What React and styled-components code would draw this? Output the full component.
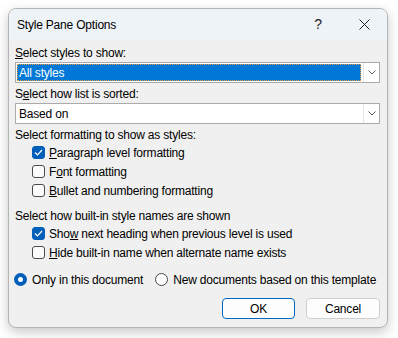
import React from "react";
import styled, { createGlobalStyle } from "styled-components";

const GlobalStyle = createGlobalStyle`
  html, body {
    margin: 0;
    padding: 0;
    background: #ffffff;
  }
  body {
    font-family: "Liberation Sans", Arial, sans-serif;
    font-size: 12px;
    letter-spacing: -0.2px;
    color: #000;
  }
`;

const Page = styled.div`
  width: 398px;
  height: 338px;
  padding: 8px;
  box-sizing: border-box;
`;

const Dialog = styled.div`
  width: 380px;
  height: 320px;
  box-sizing: border-box;
  border: 1px solid #b4b4b4;
  border-radius: 8px;
  background: #f0f0f0;
  overflow: hidden;
  box-shadow: 0 4px 12px rgba(0, 0, 0, 0.22);
  display: flex;
  flex-direction: column;
`;

const TitleBar = styled.div`
  height: 30px;
  background: #eef3f8;
  display: flex;
  align-items: center;
  padding-left: 8px;
`;

const Title = styled.div`
  flex: 1;
  font-size: 12px;
  padding-top: 1px;
`;

const TitleButton = styled.div`
  width: 46px;
  height: 30px;
  display: flex;
  align-items: center;
  justify-content: center;
  font-size: 14px;
  color: #222;
`;

const Body = styled.div`
  padding: 6px 7px 8px 6px;
  display: flex;
  flex-direction: column;
  white-space: nowrap;
`;

const Label = styled.div`
  height: 16px;
  line-height: 16px;
  margin-top: ${(p) => p.$mt || 0}px;
`;

const Combo = styled.div`
  height: 21px;
  box-sizing: border-box;
  margin-top: 1px;
  border: 1px solid #ababab;
  background: #fff;
  display: flex;
`;

const ComboValue = styled.div`
  flex: 1;
  display: flex;
  align-items: center;
  padding-left: 2px;
  margin: 1px 2px 1px 1px;
  ${(p) =>
    p.$selected
      ? `
    background: #0078d7;
    color: #fff;
    outline: 1px dotted #f29d38;
    outline-offset: -1px;
  `
      : ""}
`;

const ComboButton = styled.div`
  width: 16px;
  box-sizing: border-box;
  border-left: 1px solid #e2e2e2;
  display: flex;
  align-items: center;
  justify-content: center;
  background: #fff;
`;

const CheckGroup = styled.div`
  padding-left: 17px;
  display: flex;
  flex-direction: column;
`;

const OptionRow = styled.div`
  height: 19px;
  display: flex;
  align-items: center;
  gap: 4px;
`;

const CheckBox = styled.div`
  width: 13px;
  height: 13px;
  box-sizing: border-box;
  border-radius: 3px;
  border: 1px solid ${(p) => (p.$checked ? "#005fb8" : "#4a4a4a")};
  background: ${(p) => (p.$checked ? "#005fb8" : "#fbfbfb")};
  display: flex;
  align-items: center;
  justify-content: center;
`;

const RadioRow = styled.div`
  margin-top: 8px;
  height: 19px;
  display: flex;
  align-items: center;
  margin-left: -1px;
  gap: 12px;
`;

const RadioOption = styled.div`
  display: flex;
  align-items: center;
  gap: 5px;
`;

const Radio = styled.div`
  width: 13px;
  height: 13px;
  box-sizing: border-box;
  border-radius: 50%;
  border: ${(p) => (p.$checked ? "4px solid #005fb8" : "1px solid #4a4a4a")};
  background: ${(p) => (p.$checked ? "#fff" : "#fbfbfb")};
`;

const Buttons = styled.div`
  margin-top: 9px;
  display: flex;
  justify-content: flex-end;
  gap: 11px;
`;

const Button = styled.button`
  width: ${(p) => p.$w}px;
  height: 21px;
  border-radius: 4px;
  border: 1px solid ${(p) => (p.$primary ? "#0067c0" : "#cfcfcf")};
  background: #fdfdfd;
  font: inherit;
  letter-spacing: inherit;
  color: #000;
  padding: 0;
`;

const Chevron = () => (
  <svg width="8" height="5" viewBox="0 0 8 5">
    <path d="M0.5 0.5 L4 4 L7.5 0.5" fill="none" stroke="#606060" strokeWidth="1" />
  </svg>
);

const Check = () => (
  <svg width="9" height="7" viewBox="0 0 9 7">
    <path d="M1 3.5 L3.5 6 L8 1" fill="none" stroke="#fff" strokeWidth="1.2" />
  </svg>
);

const Close = () => (
  <svg width="11" height="11" viewBox="0 0 11 11">
    <path d="M0.5 0.5 L10.5 10.5 M10.5 0.5 L0.5 10.5" stroke="#222" strokeWidth="1" />
  </svg>
);

const Checkbox = ({ checked, children }) => (
  <OptionRow>
    <CheckBox $checked={checked}>{checked && <Check />}</CheckBox>
    <span>{children}</span>
  </OptionRow>
);

const App = () => (
  <>
    <GlobalStyle />
    <Page>
      <Dialog>
        <TitleBar>
          <Title>Style Pane Options</Title>
          <TitleButton>?</TitleButton>
          <TitleButton>
            <Close />
          </TitleButton>
        </TitleBar>
        <Body>
          <Label>
            <u>S</u>elect styles to show:
          </Label>
          <Combo>
            <ComboValue $selected>All styles</ComboValue>
            <ComboButton>
              <Chevron />
            </ComboButton>
          </Combo>
          <Label $mt={3}>
            S<u>e</u>lect how list is sorted:
          </Label>
          <Combo>
            <ComboValue>Based on</ComboValue>
            <ComboButton>
              <Chevron />
            </ComboButton>
          </Combo>
          <Label $mt={3}>Select formatting to show as styles:</Label>
          <CheckGroup>
            <Checkbox checked>
              <u>P</u>aragraph level formatting
            </Checkbox>
            <Checkbox>
              F<u>o</u>nt formatting
            </Checkbox>
            <Checkbox>
              <u>B</u>ullet and numbering formatting
            </Checkbox>
          </CheckGroup>
          <Label $mt={8}>Select how built-in style names are shown</Label>
          <CheckGroup>
            <Checkbox checked>
              Sho<u>w</u> next heading when previous level is used
            </Checkbox>
            <Checkbox>
              <u>H</u>ide built-in name when alternate name exists
            </Checkbox>
          </CheckGroup>
          <RadioRow>
            <RadioOption>
              <Radio $checked />
              <span>Only in this document</span>
            </RadioOption>
            <RadioOption>
              <Radio />
              <span>New documents based on this template</span>
            </RadioOption>
          </RadioRow>
          <Buttons>
            <Button $primary $w={73}>
              OK
            </Button>
            <Button $w={74}>Cancel</Button>
          </Buttons>
        </Body>
      </Dialog>
    </Page>
  </>
);

export default App;
